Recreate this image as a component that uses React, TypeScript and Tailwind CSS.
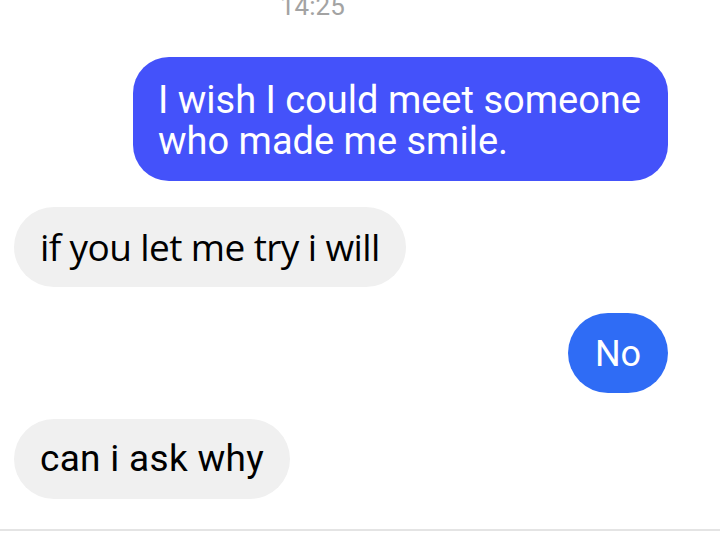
import React from "react";

export default function App() {
  return (
    <div className="w-[720px] h-[544px] bg-white overflow-hidden relative" style={{ fontFamily: "Roboto, sans-serif" }}>
      <div className="flex flex-col">
        <div className="h-[20px] flex justify-start pl-[280px]">
          <span className="text-[26px] leading-[26px] mt-[-7px] text-[#a3a3a3]">14:25</span>
        </div>
        <div className="flex justify-end pr-[52px] mt-[37px]">
          <div className="bg-[#4452fa] rounded-[36px] w-[535px] h-[124px] pl-[25px] pt-[23px] text-white text-[38px] leading-[41px]">
            I wish I could meet someone<br />who made me smile.
          </div>
        </div>
        <div className="flex justify-start pl-[14px] mt-[26px]">
          <div
            className="bg-[#f0f0f0] rounded-[40px] w-[392px] h-[80px] pl-[26px] flex items-center text-black text-[37px] leading-[46px] tracking-[-0.6px] whitespace-nowrap"
            style={{ fontFamily: "'Open Sans', sans-serif" }}
          >
            if you let me try i will
          </div>
        </div>
        <div className="flex justify-end pr-[52px] mt-[26px]">
          <div className="bg-[#2f6cf5] rounded-[40px] w-[100px] h-[80px] flex items-center justify-center text-white text-[36px] leading-[40px] pt-[2px]">
            No
          </div>
        </div>
        <div className="flex justify-start pl-[14px] mt-[26px]">
          <div className="bg-[#f0f0f0] rounded-[40px] w-[276px] h-[80px] pl-[26px] flex items-center text-black text-[37px] leading-[40px] tracking-[0.3px] whitespace-nowrap">
            can i ask why
          </div>
        </div>
        <div className="mt-[30px] h-[2px] bg-[#e4e4e4]" />
      </div>
    </div>
  );
}
